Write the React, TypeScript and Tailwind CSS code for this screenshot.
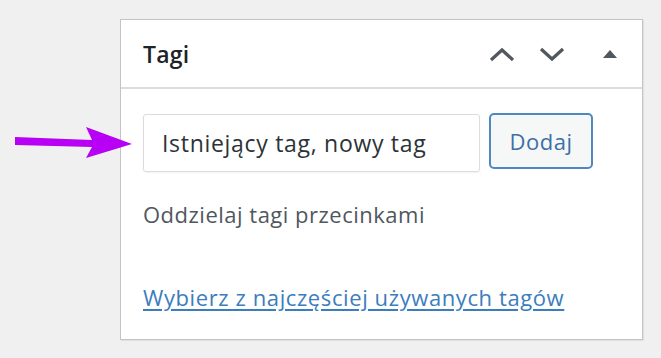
export default function App() {
  return (
    <div
      className="w-[661px] h-[358px] bg-[#f0f0f1] overflow-hidden relative"
      style={{ fontFamily: '"Open Sans", "Noto Sans", sans-serif' }}
    >
      {/* pointer arrow */}
      <svg
        className="absolute left-[12px] top-[124px]"
        width="122"
        height="36"
        viewBox="0 0 122 36"
      >
        <path
          d="M3 13 L80 16 L74 3 L120 20 L74 34 L80 23 L3 21 Z"
          fill="#b800f5"
        />
      </svg>

      <div className="ml-[120px] mt-[19px] w-[523px] h-[321px] bg-white border border-[#c3c4c7] shadow-[1px_1px_1px_rgba(0,0,0,0.06)] flex flex-col">
        <div className="h-[69px] border-b-2 border-[#dcdcde] flex items-center pl-[22px] pr-[24px]">
          <h2 className="text-[23px] font-semibold text-[#1d2327] tracking-[0.2px] pt-[2px]">Tagi</h2>
          <div className="ml-auto flex items-center">
            <svg width="28" height="18" viewBox="0 0 28 18" className="mr-[22px]">
              <path d="M3 15 L14 5 L25 15" stroke="#50575e" strokeWidth="3.2" fill="none" />
            </svg>
            <svg width="28" height="18" viewBox="0 0 28 18" className="mr-[36px]">
              <path d="M3 4 L14 14 L25 4" stroke="#50575e" strokeWidth="3.2" fill="none" />
            </svg>
            <svg width="16" height="10" viewBox="0 0 16 10">
              <path d="M8 1 L15 9 L1 9 Z" fill="#50575e" />
            </svg>
          </div>
        </div>

        <div className="pl-[22px] pt-[25px] flex flex-col">
          <div className="flex items-start gap-[9px]">
            <div className="w-[337px] h-[58px] border border-[#dcdcde] rounded-[3px] shadow-[0_1px_2px_rgba(0,0,0,0.05)] flex items-center pl-[18px] text-[23px] text-[#2c3338] tracking-[0.7px]">
              Istniejący tag, nowy tag
            </div>
            <button className="w-[104px] h-[56px] -mt-[1px] border-2 border-[#4f88c1] rounded-[5px] bg-[#f6f7f7] text-[22px] text-[#3d6fa6] tracking-[0.5px]">
              Dodaj
            </button>
          </div>

          <p className="mt-[27px] text-[22px] text-[#50575e] tracking-[0.5px] leading-[30px]">
            Oddzielaj tagi przecinkami
          </p>

          <a
            href="#"
            className="mt-[53px] self-start text-[22px] text-[#3c7dbd] underline underline-offset-[3px] tracking-[0.6px] leading-[30px]"
          >
            Wybierz z najczęściej używanych tagów
          </a>
        </div>
      </div>
    </div>
  );
}
